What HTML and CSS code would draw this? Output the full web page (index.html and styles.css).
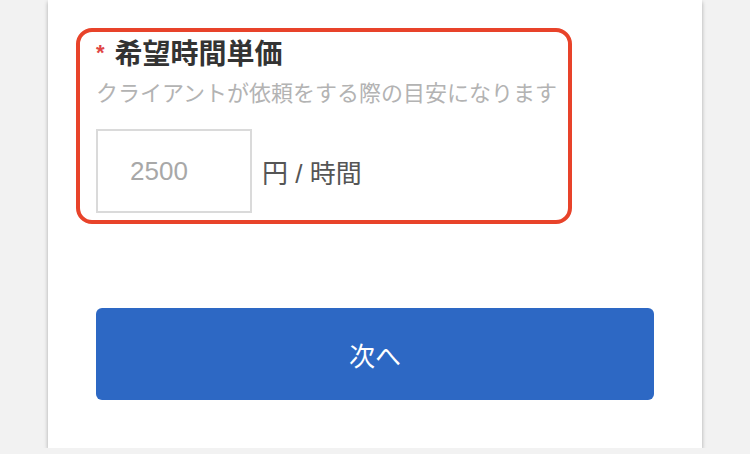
FILE: index.html
```html
<!DOCTYPE html>
<html lang="ja">
<head>
    <meta charset="UTF-8">
    <meta name="viewport" content="width=device-width, initial-scale=1.0">
    <title>希望時間単価</title>
    <link rel="stylesheet" href="styles.css">
</head>
<body>
    <div class="card">
        <section class="field">
            <h2 class="field-title"><span class="required">*</span>希望時間単価</h2>
            <p class="field-note">クライアントが依頼をする際の目安になります</p>
            <div class="field-row">
                <input type="text" class="rate-input" placeholder="2500">
                <span class="unit">円 / 時間</span>
            </div>
        </section>
        <button type="button" class="next-btn">次へ</button>
    </div>
</body>
</html>
```

FILE: styles.css
```css
body {
    margin: 0;
    padding: 0;
    background-color: #f2f2f2;
    font-family: "Liberation Sans", "Noto Sans CJK JP", sans-serif;
}
.card {
    width: 654px;
    box-sizing: border-box;
    margin: 0 auto;
    padding: 28px 48px 48px;
    background: #fff;
    box-shadow: 0 2px 4px rgba(0, 0, 0, 0.3);
}
.field {
    width: 496px;
    box-sizing: border-box;
    margin-left: -20px;
    padding: 3px 8px 7px 16px;
    border: 4px solid #e8432a;
    border-radius: 16px;
}
.field-title {
    display: flex;
    align-items: center;
    margin: 0;
    font-size: 28px;
    line-height: 40px;
    font-weight: bold;
    color: #333;
}
.required {
    color: #e04545;
    font-size: 22px;
    margin-right: 10px;
    margin-top: -4px;
}
.field-note {
    margin: 4px 0 0;
    font-size: 22px;
    line-height: 30px;
    color: #b3b3b3;
    white-space: nowrap;
}
.field-row {
    display: flex;
    align-items: center;
    margin-top: 20px;
}
.rate-input {
    width: 156px;
    height: 84px;
    box-sizing: border-box;
    padding: 0 0 0 32px;
    border: 2px solid #dadada;
    outline: none;
    font-family: inherit;
    font-size: 26px;
    color: #333;
}
.rate-input::placeholder {
    color: #a8a8a8;
}
.unit {
    margin-left: 10px;
    font-size: 26px;
    color: #555;
}
.next-btn {
    display: block;
    width: 100%;
    height: 92px;
    margin-top: 84px;
    border: none;
    border-radius: 6px;
    background: #2d68c4;
    color: #fff;
    font-family: inherit;
    font-size: 26px;
}
```
